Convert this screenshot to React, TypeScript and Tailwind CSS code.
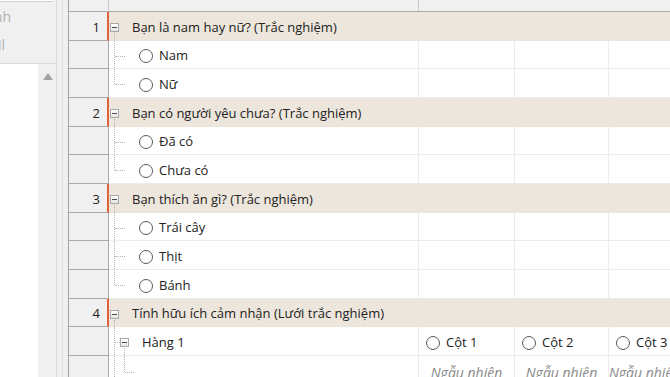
import React from "react";

type Row =
  | { kind: "q"; num: number; text: string; h: string }
  | { kind: "opt"; text: string; last: boolean; h: string }
  | { kind: "gridrow"; text: string; h: string }
  | { kind: "gridsub"; h: string };

const rows: Row[] = [
  { kind: "q", num: 1, text: "Bạn là nam hay nữ? (Trắc nghiệm)", h: "h-[29px]" },
  { kind: "opt", text: "Nam", last: false, h: "h-[28px]" },
  { kind: "opt", text: "Nữ", last: true, h: "h-[29px]" },
  { kind: "q", num: 2, text: "Bạn có người yêu chưa? (Trắc nghiệm)", h: "h-[29px]" },
  { kind: "opt", text: "Đã có", last: false, h: "h-[28px]" },
  { kind: "opt", text: "Chưa có", last: true, h: "h-[29px]" },
  { kind: "q", num: 3, text: "Bạn thích ăn gì? (Trắc nghiệm)", h: "h-[29px]" },
  { kind: "opt", text: "Trái cây", last: false, h: "h-[28px]" },
  { kind: "opt", text: "Thịt", last: false, h: "h-[29px]" },
  { kind: "opt", text: "Bánh", last: true, h: "h-[29px]" },
  { kind: "q", num: 4, text: "Tính hữu ích cảm nhận (Lưới trắc nghiệm)", h: "h-[28px]" },
  { kind: "gridrow", text: "Hàng 1", h: "h-[29px]" },
  { kind: "gridsub", h: "h-[29px]" },
];

function MinusBox() {
  return (
    <div className="w-[9px] h-[9px] border border-[#a9a9a9] bg-gradient-to-b from-white to-[#e4e4e4] flex items-center justify-center">
      <div className="w-[5px] h-px bg-[#4a4a4a]" />
    </div>
  );
}

function Radio() {
  return <div className="w-[14px] h-[14px] rounded-full border border-[#5a5a5a] bg-white shrink-0" />;
}

function ExtraCells({ children }: { children?: React.ReactNode[] }) {
  return (
    <>
      <div className="w-[96px] h-full border-r border-[#ececec] flex items-center pt-[3px]">{children?.[0]}</div>
      <div className="w-[94px] h-full border-r border-[#ececec] flex items-center pt-[3px]">{children?.[1]}</div>
      <div className="flex-1 h-full flex items-center pt-[3px]">{children?.[2]}</div>
    </>
  );
}

function RowView({ row }: { row: Row }) {
  const isQ = row.kind === "q";
  return (
    <div className={`flex ${row.h} shrink-0`}>
      <div
        className={`w-[40px] shrink-0 bg-[#f0f0f0] border-b border-[#a9a9a9] flex items-center justify-end pr-[7px] pt-[3px] text-[13px] text-[#222] ${
          isQ ? "border-r-2 border-r-[#e0623a]" : "border-r border-r-[#a9a9a9]"
        }`}
      >
        {isQ ? row.num : ""}
      </div>
      {row.kind === "q" && (
        <div className="flex-1 bg-[#ede6dc] border-b border-[#e9e3da] flex items-center pt-[3px] relative">
          <div className="absolute left-[1px] top-[11px]">
            <MinusBox />
          </div>
          <div className="absolute left-[5px] top-[21px] bottom-0 border-l border-dotted border-[#b4b4b4]" />
          <span className="ml-[23px] text-[13px] text-[#222]">{row.text}</span>
        </div>
      )}
      {row.kind === "opt" && (
        <div className="flex-1 flex h-full">
          <div className="w-[310px] h-full border-r border-b border-[#ececec] relative flex items-center pt-[3px]">
            <div
              className={`absolute left-[5px] top-0 border-l border-dotted border-[#b4b4b4] ${
                row.last ? "h-[15px]" : "bottom-0"
              }`}
            />
            <div className="absolute left-[6px] top-[15px] w-[10px] border-t border-dotted border-[#b4b4b4]" />
            <div className="ml-[30px] flex items-center gap-[6px]">
              <Radio />
              <span className="text-[13px] text-[#222]">{row.text}</span>
            </div>
          </div>
          <div className="flex-1 flex h-full border-b border-[#ececec]">
            <ExtraCells />
          </div>
        </div>
      )}
      {row.kind === "gridrow" && (
        <div className="flex-1 flex h-full">
          <div className="w-[310px] h-full border-r border-b border-[#ececec] relative flex items-center pt-[3px]">
            <div className="absolute left-[5px] top-0 bottom-0 border-l border-dotted border-[#b4b4b4]" />
            <div className="absolute left-[6px] top-[15px] w-[5px] border-t border-dotted border-[#b4b4b4]" />
            <div className="absolute left-[11px] top-[11px]">
              <MinusBox />
            </div>
            <div className="absolute left-[15px] top-[21px] bottom-0 border-l border-dotted border-[#b4b4b4]" />
            <span className="ml-[33px] text-[13px] text-[#222]">{row.text}</span>
          </div>
          <div className="flex-1 flex h-full border-b border-[#ececec]">
            <ExtraCells>
              {["Cột 1", "Cột 2", "Cột 3"].map((c) => (
                <div key={c} className="ml-[7px] flex items-center gap-[6px] whitespace-nowrap">
                  <Radio />
                  <span className="text-[13px] text-[#222]">{c}</span>
                </div>
              ))}
            </ExtraCells>
          </div>
        </div>
      )}
      {row.kind === "gridsub" && (
        <div className="flex-1 flex h-full">
          <div className="w-[310px] h-full border-r border-[#ececec] relative">
            <div className="absolute left-[5px] top-0 bottom-0 border-l border-dotted border-[#b4b4b4]" />
            <div className="absolute left-[15px] top-0 h-[16px] border-l border-dotted border-[#b4b4b4]" />
            <div className="absolute left-[16px] top-[16px] w-[9px] border-t border-dotted border-[#b4b4b4]" />
          </div>
          <div className="flex-1 flex h-full">
            <ExtraCells>
              {[1, 2, 3].map((i) => (
                <div key={i} className="w-full text-center italic text-[14px] text-[#8a8a8a] whitespace-nowrap overflow-hidden">
                  Ngẫu nhiên
                </div>
              ))}
            </ExtraCells>
          </div>
        </div>
      )}
    </div>
  );
}

export default function App() {
  return (
    <div
      className="w-[670px] h-[377px] overflow-hidden flex bg-[#f0f0f0]"
      style={{ fontFamily: '"Open Sans", "Noto Sans", sans-serif' }}
    >
      {/* left side panel, mostly scrolled out */}
      <div className="w-[57px] shrink-0 flex flex-col border-r border-[#dcdcdc] overflow-hidden">
        <div className="h-[2px] w-[53px] bg-white border-b border-[#d0d0d0]" />
        <div className="h-[28px] flex items-center">
          <div className="w-[11px] flex justify-end text-[14px] text-[#b0b0b0] whitespace-nowrap">
            <span className="shrink-0">Hình ảnh</span>
          </div>
        </div>
        <div className="h-[28px] flex items-center">
          <div className="w-[5px] flex justify-end text-[14px] text-[#b0b0b0] whitespace-nowrap">
            <span className="shrink-0">Email</span>
          </div>
        </div>
        <div className="h-[5px]" />
        <div className="flex-1 flex border-t border-[#dadada]">
          <div className="w-[38px] bg-white" />
          <div className="flex-1 bg-[#f0f0f0] flex justify-center pt-[9px] pl-[2px]">
            <div className="w-0 h-0 border-l-[5px] border-r-[5px] border-b-[7px] border-l-transparent border-r-transparent border-b-[#a3a3a3]" />
          </div>
        </div>
      </div>
      <div className="w-[6px] shrink-0 border-r border-[#e2e2e2]" />
      <div className="w-[5px] shrink-0" />

      {/* grid */}
      <div className="flex-1 flex flex-col border-l border-[#a0a0a0] bg-white">
        <div className="h-[12px] shrink-0 flex border-b border-[#a9a9a9] bg-[#f0f0f0] shadow-[0_1px_0_#d8d8d8]">
          <div className="w-[40px] border-r border-[#c8c8c8]" />
          <div className="w-[310px] border-r border-[#c8c8c8]" />
          <div className="flex-1" />
        </div>
        {rows.map((r, i) => (
          <RowView key={i} row={r} />
        ))}
      </div>
    </div>
  );
}
